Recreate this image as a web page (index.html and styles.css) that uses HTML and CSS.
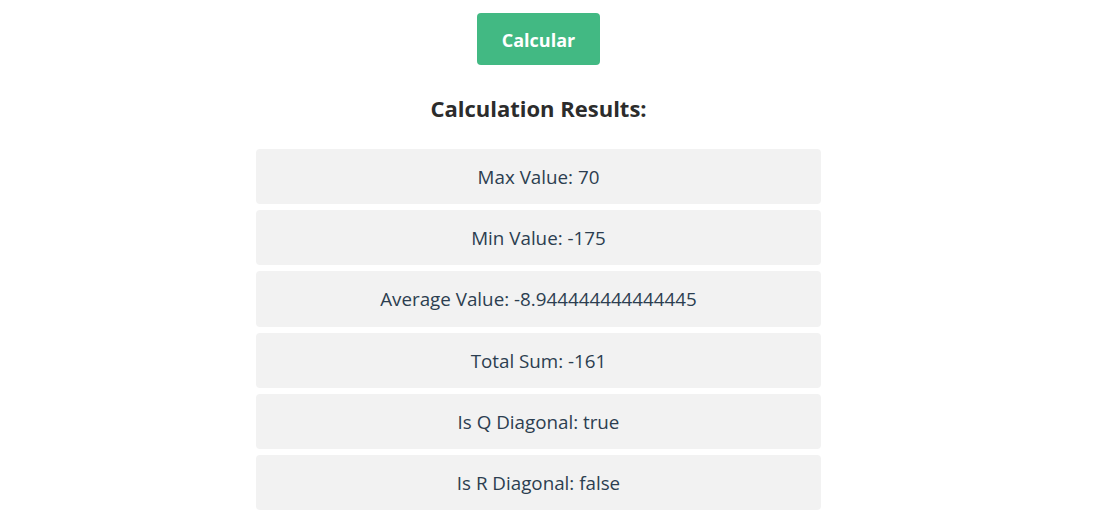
FILE: index.html
```html
<!DOCTYPE html>
<html>
<head>
<meta charset="utf-8">
<link rel="stylesheet" href="styles.css">
</head>
<body>
<div class="page">
  <button class="calc-btn">Calcular</button>
  <h2 class="results-title">Calculation Results:</h2>
  <div class="results">
    <div class="result-item">Max Value: 70</div>
    <div class="result-item">Min Value: -175</div>
    <div class="result-item">Average Value: -8.944444444444445</div>
    <div class="result-item">Total Sum: -161</div>
    <div class="result-item">Is Q Diagonal: true</div>
    <div class="result-item">Is R Diagonal: false</div>
  </div>
</div>
</body>
</html>
```

FILE: styles.css
```css
html, body {
  margin: 0;
  padding: 0;
  background: #ffffff;
}
body {
  font-family: "Open Sans", "Noto Sans", sans-serif;
  color: #2c3e50;
}
.page {
  display: flex;
  flex-direction: column;
  align-items: center;
  margin-right: 16px;
  padding-top: 13px;
}
.calc-btn {
  background: #42b983;
  color: #ffffff;
  border: none;
  border-radius: 4px;
  font-family: inherit;
  font-weight: 700;
  font-size: 18px;
  line-height: 28px;
  padding: 13px 25px 11px;
  cursor: pointer;
}
.results-title {
  margin: 0;
  margin-top: 29px;
  font-size: 22px;
  font-weight: 700;
  line-height: 28px;
  color: #2c2c2c;
}
.results {
  margin-top: 27px;
  width: 565px;
  display: flex;
  flex-direction: column;
  gap: 6px;
}
.result-item {
  background: #f2f2f2;
  border-radius: 4px;
  text-align: center;
  font-size: 18.8px;
  line-height: 23.2px;
  padding: 17px 16px 15px;
}
```
